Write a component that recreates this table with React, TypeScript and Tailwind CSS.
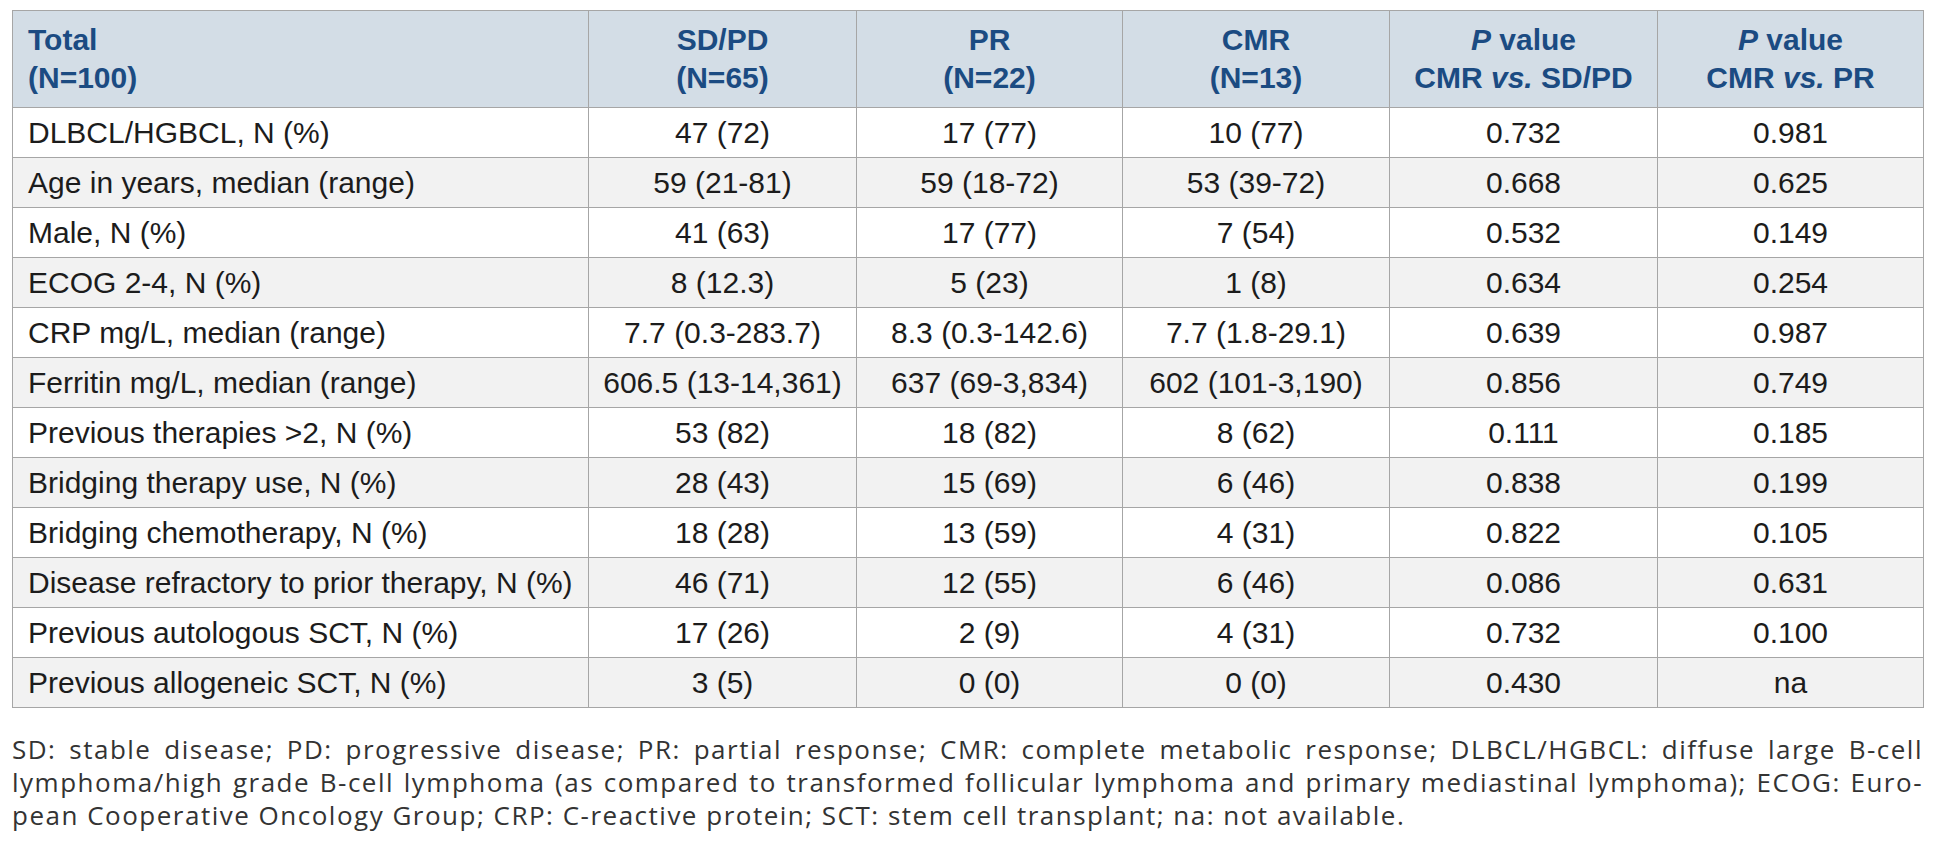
import React from 'react';

type Row = [string, string, string, string, string, string];

const rows: Row[] = [
  ['DLBCL/HGBCL, N (%)', '47 (72)', '17 (77)', '10 (77)', '0.732', '0.981'],
  ['Age in years, median (range)', '59 (21-81)', '59 (18-72)', '53 (39-72)', '0.668', '0.625'],
  ['Male, N (%)', '41 (63)', '17 (77)', '7 (54)', '0.532', '0.149'],
  ['ECOG 2-4, N (%)', '8 (12.3)', '5 (23)', '1 (8)', '0.634', '0.254'],
  ['CRP mg/L, median (range)', '7.7 (0.3-283.7)', '8.3 (0.3-142.6)', '7.7 (1.8-29.1)', '0.639', '0.987'],
  ['Ferritin mg/L, median (range)', '606.5 (13-14,361)', '637 (69-3,834)', '602 (101-3,190)', '0.856', '0.749'],
  ['Previous therapies >2, N (%)', '53 (82)', '18 (82)', '8 (62)', '0.111', '0.185'],
  ['Bridging therapy use, N (%)', '28 (43)', '15 (69)', '6 (46)', '0.838', '0.199'],
  ['Bridging chemotherapy, N (%)', '18 (28)', '13 (59)', '4 (31)', '0.822', '0.105'],
  ['Disease refractory to prior therapy, N (%)', '46 (71)', '12 (55)', '6 (46)', '0.086', '0.631'],
  ['Previous autologous SCT, N (%)', '17 (26)', '2 (9)', '4 (31)', '0.732', '0.100'],
  ['Previous allogeneic SCT, N (%)', '3 (5)', '0 (0)', '0 (0)', '0.430', 'na'],
];

const App: React.FC = () => {
  return (
    <div className="bg-white min-h-screen pt-[10px] px-[12px]">
      <table className="table-fixed border-collapse w-[1911px] font-['Liberation_Sans',Arial,sans-serif] text-[30px] text-[#1c1c1c]">
        <colgroup>
          <col className="w-[576px]" />
          <col className="w-[268px]" />
          <col className="w-[266px]" />
          <col className="w-[267px]" />
          <col className="w-[268px]" />
          <col className="w-[266px]" />
        </colgroup>
        <thead>
          <tr className="bg-[#d3dde6] text-[#1b4b82] font-bold text-[30px] leading-[38px]">
            <th className="h-[97px] border border-[#a6a6a6] px-[15px] text-left align-middle">
              Total
              <br />
              (N=100)
            </th>
            <th className="border border-[#a6a6a6] text-center align-middle">
              SD/PD
              <br />
              (N=65)
            </th>
            <th className="border border-[#a6a6a6] text-center align-middle">
              PR
              <br />
              (N=22)
            </th>
            <th className="border border-[#a6a6a6] text-center align-middle">
              CMR
              <br />
              (N=13)
            </th>
            <th className="border border-[#a6a6a6] text-center align-middle">
              <i>P</i> value
              <br />
              CMR <i>vs.</i> SD/PD
            </th>
            <th className="border border-[#a6a6a6] text-center align-middle">
              <i>P</i> value
              <br />
              CMR <i>vs.</i> PR
            </th>
          </tr>
        </thead>
        <tbody>
          {rows.map((r, i) => (
            <tr key={r[0]} className={i % 2 === 1 ? 'bg-[#f2f2f2]' : 'bg-white'}>
              <td className="h-[50px] border border-[#a6a6a6] px-[15px] text-left align-middle leading-[34px]">
                {r[0]}
              </td>
              {r.slice(1).map((c, j) => (
                <td key={j} className="border border-[#a6a6a6] text-center align-middle leading-[34px]">
                  {c}
                </td>
              ))}
            </tr>
          ))}
        </tbody>
      </table>

      {/* footnote */}
      <div className="mt-[25px] w-[1911px] font-['Open_Sans',sans-serif] text-[26px] tracking-[1.5px] leading-[33px] text-[#333333]">
        <div className="text-justify [text-align-last:justify]">
          SD: stable disease; PD: progressive disease; PR: partial response; CMR: complete metabolic response; DLBCL/HGBCL: diffuse large B-cell
        </div>
        <div className="text-justify [text-align-last:justify]">
          lymphoma/high grade B-cell lymphoma (as compared to transformed follicular lymphoma and primary mediastinal lymphoma); ECOG: Euro-
        </div>
        <div>
          pean Cooperative Oncology Group; CRP: C-reactive protein; SCT: stem cell transplant; na: not available.
        </div>
      </div>
    </div>
  );
};

export default App;
